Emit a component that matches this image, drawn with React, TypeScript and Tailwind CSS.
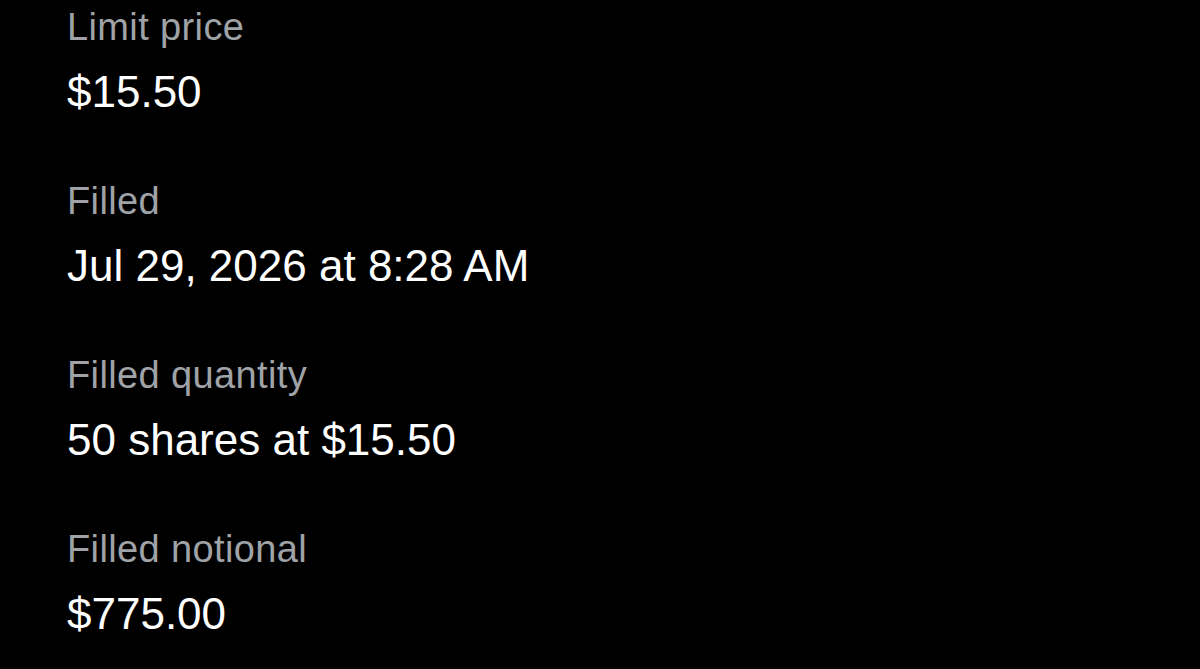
import React from 'react';

const rows = [
  { label: 'Limit price', value: '$15.50' },
  { label: 'Filled', value: 'Jul 29, 2026 at 8:28 AM' },
  { label: 'Filled quantity', value: '50 shares at $15.50' },
  { label: 'Filled notional', value: '$775.00' },
];

export default function App() {
  return (
    <div
      className="w-[1200px] h-[669px] bg-black overflow-hidden pl-[67px] pt-[5px]"
      style={{ fontFamily: '"Liberation Sans", Arial, sans-serif' }}
    >
      <div className="flex flex-col gap-[62px]">
        {rows.map((r) => (
          <div key={r.label} className="flex flex-col gap-[18px]">
            <div className="text-[38px] leading-[44px] text-[#9fa3a7] tracking-[0.01em]">{r.label}</div>
            <div className="text-[44px] leading-[50px] text-white">{r.value}</div>
          </div>
        ))}
      </div>
    </div>
  );
}
